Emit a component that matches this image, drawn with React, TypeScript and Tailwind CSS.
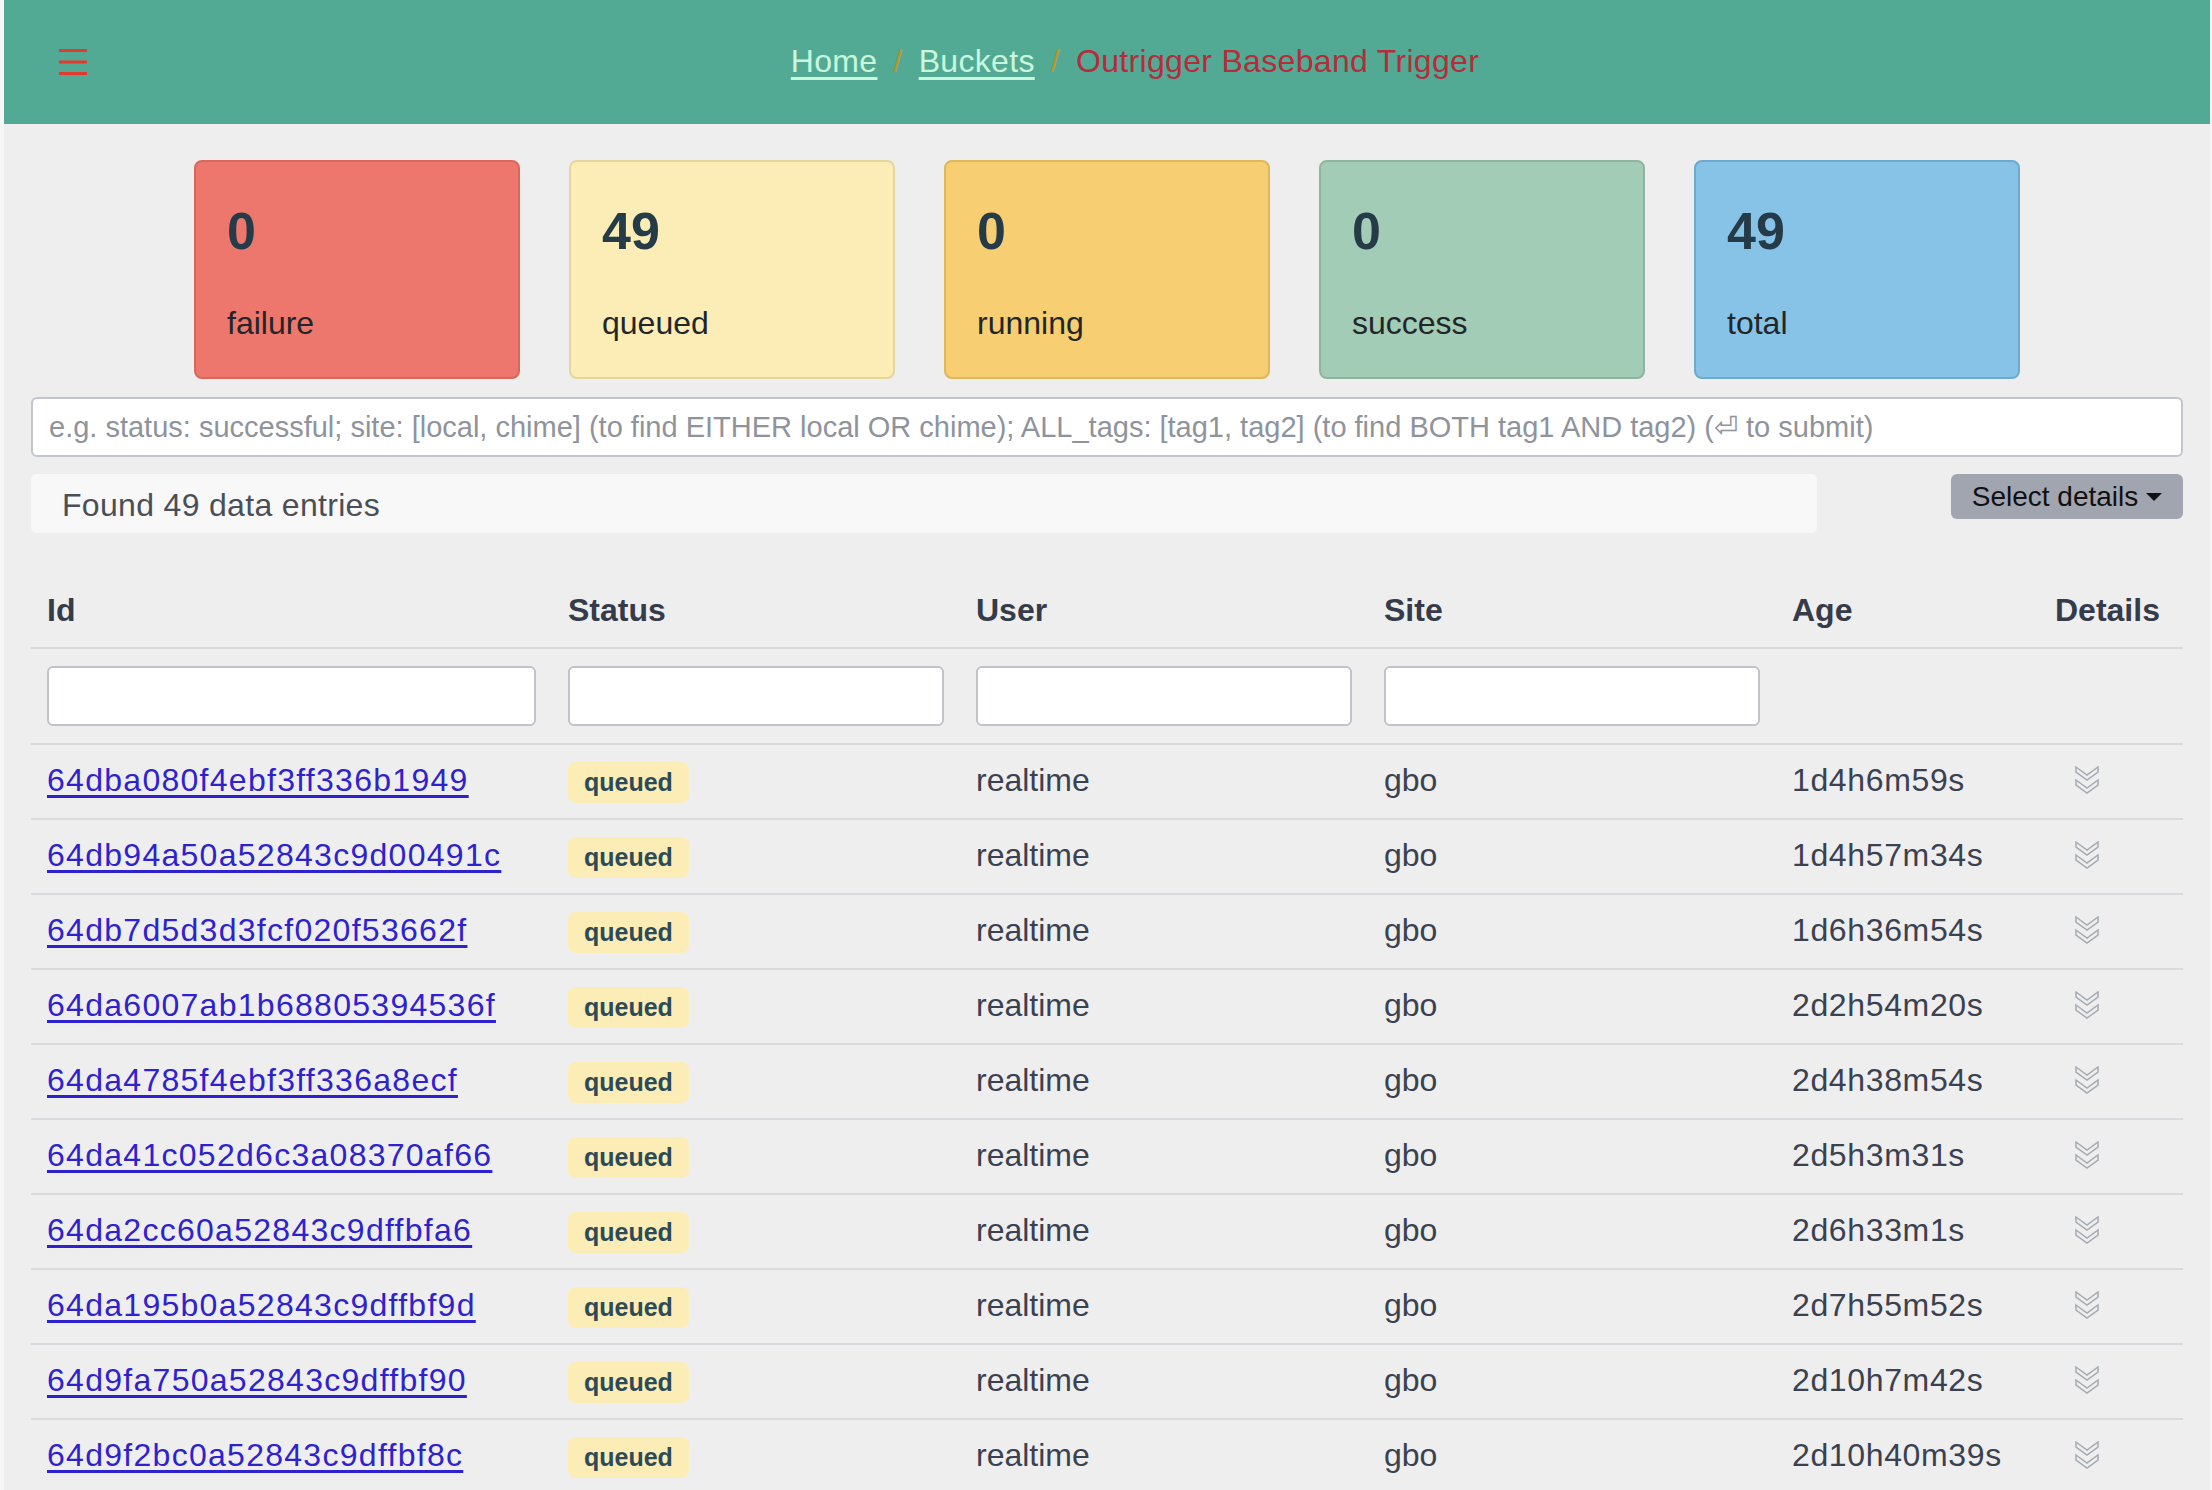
import React from 'react';

const cards = [
  { value: 0, label: 'failure', cls: 'bg-[#ed776d] border-[#d9675e]' },
  { value: 49, label: 'queued', cls: 'bg-[#fbedb5] border-[#e3d79c]' },
  { value: 0, label: 'running', cls: 'bg-[#f7ce71] border-[#dfb75c]' },
  { value: 0, label: 'success', cls: 'bg-[#a3ccb6] border-[#8fb3a0]' },
  { value: 49, label: 'total', cls: 'bg-[#86c3e7] border-[#6eaad0]' },
];

const rows = [
  ['64dba080f4ebf3ff336b1949', '1d4h6m59s'],
  ['64db94a50a52843c9d00491c', '1d4h57m34s'],
  ['64db7d5d3d3fcf020f53662f', '1d6h36m54s'],
  ['64da6007ab1b68805394536f', '2d2h54m20s'],
  ['64da4785f4ebf3ff336a8ecf', '2d4h38m54s'],
  ['64da41c052d6c3a08370af66', '2d5h3m31s'],
  ['64da2cc60a52843c9dffbfa6', '2d6h33m1s'],
  ['64da195b0a52843c9dffbf9d', '2d7h55m52s'],
  ['64d9fa750a52843c9dffbf90', '2d10h7m42s'],
  ['64d9f2bc0a52843c9dffbf8c', '2d10h40m39s'],
];

const grid = 'grid grid-cols-[521px_408px_408px_408px_263px_1fr]';

const Chevrons = () => (
  <svg width="24" height="29" viewBox="0 0 24 29" fill="none" stroke="#a5abb3" strokeWidth="1.5" strokeLinejoin="miter">
    <path d="M1 1 L12 9 L23 1 L23 6 L12 14 L1 6 Z" />
    <path d="M1 14 L12 22 L23 14 L23 19 L12 27 L1 19 Z" />
  </svg>
);

const App: React.FC = () => {
  return (
    <div className="min-h-screen bg-[#f6f6f6] pl-[4px] pr-[2px] font-['Liberation_Sans',Arial,sans-serif]">
      <div className="bg-[#eeeeee] min-h-[1490px] pb-10">
        {/* top bar */}
        <header className="h-[124px] bg-[#52aa95] flex items-center pl-[55px] pr-[27px]">
          <svg width="28" height="28" viewBox="0 0 28 28" className="shrink-0">
            <rect x="0" y="1" width="28" height="3" fill="#e5392d" />
            <rect x="0" y="12.5" width="28" height="3" fill="#e5392d" />
            <rect x="0" y="24" width="28" height="3" fill="#e5392d" />
          </svg>
          <nav className="flex-1 flex justify-center items-center text-[32px] leading-[48px] tracking-[0.01em] -mt-[2px]">
            <a href="#" className="text-[#c8f7dc] underline underline-offset-[5px]">Home</a>
            <span className="px-[16px] text-[#b8972c]">/</span>
            <a href="#" className="text-[#c8f7dc] underline underline-offset-[5px]">Buckets</a>
            <span className="px-[16px] text-[#b8972c]">/</span>
            <span className="text-[#b52c3a]">Outrigger Baseband Trigger</span>
          </nav>
        </header>

        <main className="px-[27px]">
          {/* status cards */}
          <div className="mt-[36px] flex justify-center gap-[49px]">
            {cards.map(c => (
              <div key={c.label} className={`w-[326px] h-[219px] border-2 rounded-[8px] px-[31px] pt-[39px] ${c.cls}`}>
                <div className="text-[52px] leading-[60px] font-bold text-[#263b48]">{c.value}</div>
                <div className="mt-[38px] text-[32px] leading-[48px] text-[#222629]">{c.label}</div>
              </div>
            ))}
          </div>

          {/* search */}
          <input
            className="mt-[18px] block w-full h-[60px] bg-white border-2 border-[#c2c5cc] rounded-[6px] px-[16px] text-[29px] placeholder:text-[#8e939c] outline-none"
            placeholder="e.g. status: successful; site: [local, chime] (to find EITHER local OR chime); ALL_tags: [tag1, tag2] (to find BOTH tag1 AND tag2) (⏎ to submit)"
          />

          <div className="mt-[17px] flex justify-between items-start">
            <div className="w-[1786px] h-[59px] bg-[#f8f8f8] rounded-[6px] pl-[31px] pt-[3px] flex items-center text-[32px] tracking-[0.01em] text-[#4a4f57]">
              Found 49 data entries
            </div>
            <button className="w-[232px] h-[45px] bg-[#a0a5b0] rounded-[6px] flex items-center justify-center gap-[8px] text-[28px] text-[#111]">
              Select details
              <svg width="16" height="10" viewBox="0 0 16 10"><path d="M0 1 L16 1 L8 9 Z" fill="#111" /></svg>
            </button>
          </div>

          {/* table */}
          <div className="mt-[40px] text-[32px]">
            <div className={`${grid} h-[76px] items-center border-b-2 border-[#d9d9de] font-bold text-[#343b4a]`}>
              {['Id', 'Status', 'User', 'Site', 'Age', 'Details'].map(h => (
                <div key={h} className="pl-[16px]">{h}</div>
              ))}
            </div>
            <div className={`${grid} h-[96px] items-center border-b-2 border-[#d9d9de]`}>
              {[0, 1, 2, 3].map(i => (
                <div key={i} className="px-[16px]">
                  <input className="block w-full h-[60px] bg-white border-2 border-[#bfc2c9] rounded-[6px]" />
                </div>
              ))}
              <div />
              <div />
            </div>
            {rows.map(([id, age]) => (
              <div key={id} className={`${grid} h-[75px] items-center border-b-2 border-[#d9d9de] text-[#3a4150]`}>
                <div className="pl-[16px] -mt-[3px]">
                  <a href="#" className="text-[#2e22d0] underline underline-offset-[4px] tracking-[0.04em]">{id}</a>
                </div>
                <div className="pl-[16px] -mt-[3px]">
                  <span className="inline-flex items-center h-[41px] px-[16px] rounded-[8px] bg-[#fbedb5] text-[25px] font-bold text-[#2d4a57]">queued</span>
                </div>
                <div className="pl-[16px] -mt-[3px]">realtime</div>
                <div className="pl-[16px] -mt-[3px]">gbo</div>
                <div className="pl-[16px] -mt-[3px] tracking-[0.02em]">{age}</div>
                <div className="pl-[36px] flex items-center -mt-[3px]"><Chevrons /></div>
              </div>
            ))}
          </div>
        </main>
      </div>
    </div>
  );
};

export default App;
